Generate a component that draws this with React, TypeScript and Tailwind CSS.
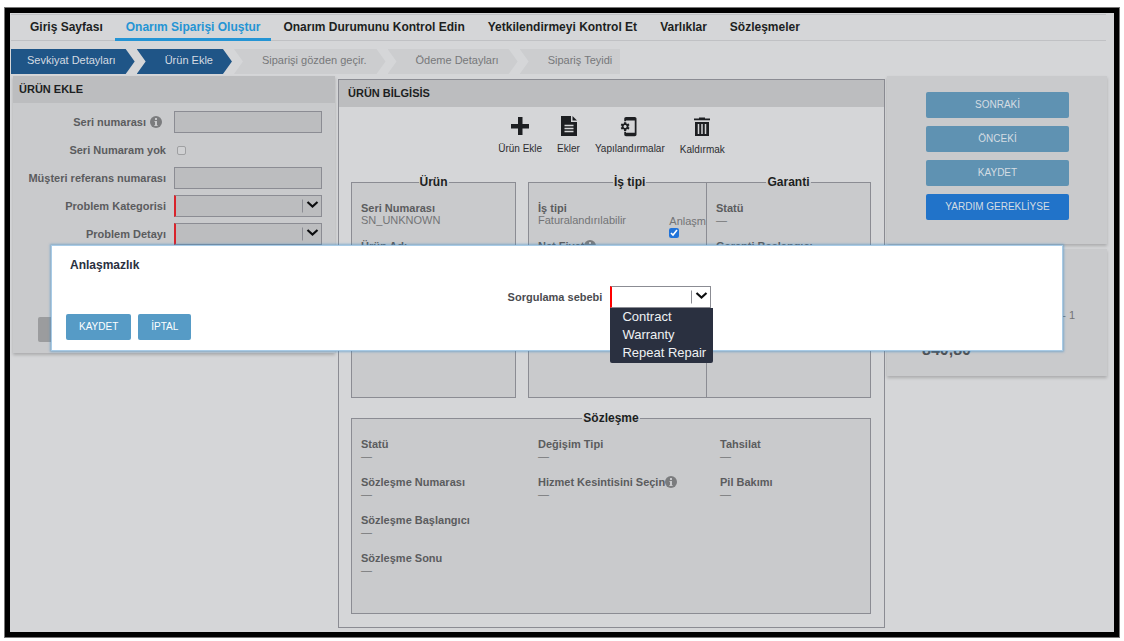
import { useId, type ReactNode } from "react";
import { MdPhonelinkSetup } from "react-icons/md";

function InfoIcon() {
  return (
    <svg viewBox="0 0 12 12" className="size-3 shrink-0" aria-hidden="true">
      <circle cx="6" cy="6" r="6" fill="#7b7c7e" />
      <path d="M5 2h2v2H5zM4.5 5H7v4h.6v1H4.4V9H5V6h-.5z" fill="#c9cacc" />
    </svg>
  );
}

function PlusIcon() {
  return (
    <svg viewBox="0 0 18 18" className="size-[18px]" aria-hidden="true">
      <path d="M7 0h4.500v7H18v4.500h-6.500V18H7v-6.500H0V7h7z" fill="#1d1f22" />
    </svg>
  );
}

function FileIcon() {
  return (
    <svg viewBox="0 0 16 20" className="h-5 w-4" aria-hidden="true">
      <path d="M0 0h10v6h6v14H0z" fill="#1d1f22" />
      <path d="M11.5 0 16 4.6h-4.500z" fill="#1d1f22" />
      <path d="M3.500 9.500h9M3.500 12.500h9M3.500 15.500h9" stroke="#d5d6d8" strokeWidth="1.300" />
    </svg>
  );
}

function TrashIcon() {
  return (
    <svg viewBox="0 0 16 20" className="h-5 w-4" aria-hidden="true">
      <path d="M5 .5h6v1h5v1.700H0V1.500h5zM1 5h14v14H1z" fill="#1d1f22" />
      <path d="M4.500 7v10M8 7v10M11.500 7v10" stroke="#d5d6d8" strokeWidth="1.500" />
    </svg>
  );
}

const tabs = [
  "Giriş Sayfası",
  "Onarım Siparişi Oluştur",
  "Onarım Durumunu Kontrol Edin",
  "Yetkilendirmeyi Kontrol Et",
  "Varlıklar",
  "Sözleşmeler",
];

const firstStep =
  "pl-4 pr-[19px] bg-[#1f5587] text-[#d5dbe2] [clip-path:polygon(0_0,calc(100%-9px)_0,100%_50%,calc(100%-9px)_100%,0_100%)]";
const arrow =
  "pl-7 pr-[19px] [clip-path:polygon(0_0,calc(100%-9px)_0,100%_50%,calc(100%-9px)_100%,0_100%,9px_50%)]";
const lastStep = "pl-7 pr-2 [clip-path:polygon(0_0,100%_0,100%_100%,0_100%,9px_50%)]";

const steps = [
  { name: "Sevkiyat Detayları", look: firstStep },
  { name: "Ürün Ekle", look: `${arrow} bg-[#1f5587] text-[#d5dbe2]` },
  { name: "Siparişi gözden geçir.", look: `${arrow} bg-[#cccdcf] text-[#77787a]` },
  { name: "Ödeme Detayları", look: `${arrow} bg-[#cccdcf] text-[#77787a]` },
  { name: "Sipariş Teyidi", look: `${lastStep} bg-[#cccdcf] text-[#77787a]` },
];

function SelectBox({ id, look, children }: { id: string; look: string; children?: ReactNode }) {
  return (
    <div className="relative h-[22px]">
      <select
        id={id}
        className={`block size-full appearance-none border border-l-2 border-[#8b8c93] pl-2 pr-5 text-[11px] ${look}`}
        defaultValue=""
      >
        <option value="" />
        {children}
      </select>
      <svg viewBox="0 0 20 22" className="pointer-events-none absolute right-0 top-0 h-[22px] w-5" aria-hidden="true">
        <path d="M.5 4.500v13" stroke="#8b8c93" />
        <path d="m5.500 7 5 4.500 5-4.500" fill="none" stroke="#0c0d0f" strokeWidth="2.200" />
      </svg>
    </div>
  );
}

function FormRow({ label, id, info, children }: { label: string; id: string; info?: boolean; children: ReactNode }) {
  return (
    <div className="grid min-h-[22px] grid-cols-[153px_minmax(0,1fr)] items-center gap-2">
      <div className="flex items-center justify-end gap-1">
        <label htmlFor={id} className="whitespace-nowrap text-[11px] font-bold text-[#5b5c5e]">
          {label}
        </label>
        {info && (
          <span className="mr-1">
            <InfoIcon />
          </span>
        )}
      </div>
      {children}
    </div>
  );
}

function Field({ label, value = "—", info }: { label: string; value?: string; info?: boolean }) {
  return (
    <div className="mb-3.5 text-[11px] leading-3">
      <dt className="flex items-center whitespace-nowrap font-bold text-[#5b5c5e]">
        {label}
        {info && <InfoIcon />}
      </dt>
      <dd className="whitespace-nowrap text-[#737476]">{value}</dd>
    </div>
  );
}

const group = "min-w-0 border border-[#8b8c93] bg-[#c9cacc] px-[9px] pt-3";
const legend = "px-px text-xs leading-4 font-bold text-[#1d1f22]";
const tool = "flex flex-col items-center gap-1 text-[10px] leading-[15px] text-[#2c2d30]";
const toolIcon = "flex h-[22px] items-center justify-center text-[#1d1f22]";
const sideButton = "h-[26px] rounded-xs pb-0.5 text-[10px]";
const modalButton = "h-[26px] rounded-xs bg-[#569bc6] px-[13px] pb-0.5 text-[10px] text-white";
const textInput = "h-[22px] w-full min-w-0 border border-[#8b8c93] bg-[#bcbdbf] px-2 text-[11px]";
const card = "bg-[#c9cacc] shadow-[0_2px_3px_rgba(0,0,0,0.2)]";

export default function App() {
  const uid = useId();
  return (
    <div className="flex min-h-screen flex-col bg-white px-[5px] pt-2 pb-1 font-['Liberation_Sans',Arial,sans-serif]">
      <div className="relative flex-1 border-[5px] border-black bg-[#d5d6d8] pl-px ring-1 ring-[#777777]">
        <nav className="mt-px mr-2 flex h-[27px] gap-px border-y border-[#c0c1c4] pl-2">
          {tabs.map((t, i) => (
            <a
              key={t}
              href="#"
              className={`-mb-px border-b-[3px] px-[11px] text-xs leading-6 font-bold whitespace-nowrap ${
                i === 1 ? "border-[#2494d4] text-[#2494d4]" : "border-transparent text-[#1d1f22]"
              }`}
            >
              {t}
            </a>
          ))}
        </nav>

        <ol className="mt-2 flex gap-0.5">
          {steps.map((s) => (
            <li key={s.name} className={`h-[25px] text-[11px] leading-[23px] whitespace-nowrap ${s.look}`}>
              {s.name}
            </li>
          ))}
        </ol>

        <main className="mt-0.5 mr-[7px] ml-0.5 grid grid-cols-[322px_minmax(0,1fr)_220px] items-start gap-0.5">
          <section className={card}>
            <h2 className="h-[27px] bg-[#bcbdbf] px-1.5 text-[11px] leading-[27px] font-bold text-[#1d1f22]">ÜRÜN EKLE</h2>
            <form className="pt-2 pr-[13px] pb-[11px]">
              <div className="flex flex-col gap-1.5">
                <FormRow label="Seri numarası" id={`${uid}sn`} info>
                  <input id={`${uid}sn`} type="text" className={textInput} />
                </FormRow>
                <FormRow label="Seri Numaram yok" id={`${uid}no`}>
                  <input
                    id={`${uid}no`}
                    type="checkbox"
                    className="ml-[3px] size-[9px] appearance-none rounded-xs border border-[#9fa0a2] bg-[#d0d1d3]"
                  />
                </FormRow>
                <FormRow label="Müşteri referans numarası" id={`${uid}ref`}>
                  <input id={`${uid}ref`} type="text" className={textInput} />
                </FormRow>
                <FormRow label="Problem Kategorisi" id={`${uid}cat`}>
                  <SelectBox id={`${uid}cat`} look="border-l-[#d9232b] bg-[#bcbdbf]" />
                </FormRow>
                <FormRow label="Problem Detayı" id={`${uid}det`}>
                  <SelectBox id={`${uid}det`} look="border-l-[#d9232b] bg-[#bcbdbf]" />
                </FormRow>
              </div>
              <button type="button" aria-label="Ekle" className="mt-[72px] ml-[25px] block h-[25px] w-20 rounded-xs bg-[#9b9c9e]" />
            </form>
          </section>

          <section className="mt-[3px] ml-px border border-[#8b8c93] pb-[13px]">
            <h2 className="h-[27px] bg-[#bcbdbf] px-[9px] text-[11px] leading-[27px] font-bold text-[#1d1f22]">
              ÜRÜN BİLGİSİS
            </h2>
            <div className="flex justify-center gap-[15px] pt-2">
              <button type="button" className={tool}>
                <span className={toolIcon}>
                  <PlusIcon />
                </span>
                Ürün Ekle
              </button>
              <button type="button" className={tool}>
                <span className={toolIcon}>
                  <FileIcon />
                </span>
                Ekler
              </button>
              <button type="button" className={tool}>
                <span className={toolIcon}>
                  <MdPhonelinkSetup className="size-[21px]" />
                </span>
                Yapılandırmalar
              </button>
              <button type="button" className={`${tool} pt-px`}>
                <span className={toolIcon}>
                  <TrashIcon />
                </span>
                Kaldırmak
              </button>
            </div>

            <div className="mt-[17px] flex pr-[13px] pl-3">
              <fieldset className={`${group} mr-3 min-h-[224px] flex-[145]`}>
                <legend className={`${legend} mx-auto`}>Ürün</legend>
                <dl>
                  <Field label="Seri Numarası" value="SN_UNKNOWN" />
                  <Field label="Ürün Adı" />
                </dl>
              </fieldset>
              <fieldset className={`${group} min-h-[224px] flex-[159]`}>
                <legend className={`${legend} ml-[75px]`}>İş tipi</legend>
                <div className="flex justify-between">
                  <dl>
                    <Field label="İş tipi" value="Faturalandırılabilir" />
                    <Field label="Net Fiyat" info />
                  </dl>
                  <div className="-mr-[9px] pt-3 text-[11px] leading-[14px] text-[#737476]">
                    <label htmlFor={`${uid}dis`} className="block whitespace-nowrap">
                      Anlaşm
                    </label>
                    <input id={`${uid}dis`} type="checkbox" defaultChecked className="block size-[10px] accent-[#2173d9]" />
                  </div>
                </div>
              </fieldset>
              <fieldset className={`${group} -ml-px min-h-[224px] flex-[145]`}>
                <legend className={`${legend} mx-auto`}>Garanti</legend>
                <dl>
                  <Field label="Statü" />
                  <Field label="Garanti Başlangıcı" />
                </dl>
              </fieldset>
            </div>

            <div className="mt-3 pr-[13px] pl-3">
              <fieldset className={`${group} min-h-[204px]`}>
                <legend className={`${legend} mx-auto`}>Sözleşme</legend>
                <div className="grid grid-cols-[177fr_182fr_141fr]">
                  <dl>
                    <Field label="Statü" />
                    <Field label="Sözleşme Numarası" />
                    <Field label="Sözleşme Başlangıcı" />
                    <Field label="Sözleşme Sonu" />
                  </dl>
                  <dl>
                    <Field label="Değişim Tipi" />
                    <Field label="Hizmet Kesintisini Seçin" info />
                  </dl>
                  <dl>
                    <Field label="Tahsilat" />
                    <Field label="Pil Bakımı" />
                  </dl>
                </div>
              </fieldset>
            </div>
          </section>

          <aside className="flex flex-col gap-[5px]">
            <div className={`${card} flex flex-col gap-2 pr-[38px] pl-[39px] pt-4 pb-6`}>
              <button type="button" className={`${sideButton} bg-[#5f92b2] text-[#d5dde3]`}>SONRAKİ</button>
              <button type="button" className={`${sideButton} bg-[#5f92b2] text-[#d5dde3]`}>ÖNCEKİ</button>
              <button type="button" className={`${sideButton} bg-[#5f92b2] text-[#d5dde3]`}>KAYDET</button>
              <button type="button" className={`${sideButton} bg-[#2173c9] text-[#d5dde3]`}>YARDIM GEREKLİYSE</button>
            </div>
            <div className={`${card} px-8 pt-[59px] pb-4`}>
              <p className="text-right text-[11px] leading-[14px] text-[#737476]">- 1</p>
              <p className="mt-[18px] pl-[3px] text-base leading-5 font-bold text-[#4f5052]">840,80</p>
            </div>
          </aside>
        </main>

        <div
          role="dialog"
          aria-labelledby={`${uid}title`}
          className="absolute top-[232px] right-[51px] left-[41px] border border-[#a8cbe6] bg-white px-3.5 pt-[11px] pb-2.5 shadow-[0_0_2px_1px_rgba(60,140,200,0.5)]"
        >
          <h2 id={`${uid}title`} className="pl-1 text-xs leading-4 font-bold text-[#2a3040]">
            Anlaşmazlık
          </h2>
          <div className="mt-[13px] flex items-center justify-center gap-2 pl-[105px]">
            <label htmlFor={`${uid}why`} className="text-[11px] font-bold text-[#4b4c50]">
              Sorgulama sebebi
            </label>
            <div className="relative w-[101px]">
              <SelectBox id={`${uid}why`} look="border-l-[#ff0000] bg-white">
                <option>Contract</option>
                <option>Warranty</option>
                <option>Repeat Repair</option>
              </SelectBox>
              <ul
                role="listbox"
                aria-label="Sorgulama sebebi"
                className="absolute top-full left-0 w-[103px] rounded-b-xs bg-[#2a3040] pl-3 pb-px text-[13px] leading-[18px] whitespace-nowrap text-[#eef0f3]"
              >
                <li role="option">Contract</li>
                <li role="option">Warranty</li>
                <li role="option">Repeat Repair</li>
              </ul>
            </div>
          </div>
          <div className="mt-1.5 flex gap-[7px]">
            <button type="button" className={modalButton}>KAYDET</button>
            <button type="button" className={modalButton}>İPTAL</button>
          </div>
        </div>
      </div>
    </div>
  );
}
